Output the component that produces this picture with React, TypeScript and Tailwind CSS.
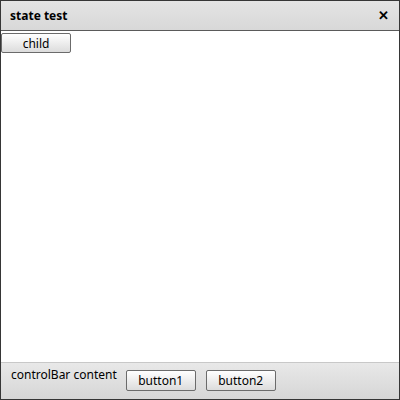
const App = () => {
  return (
    <div className="w-[400px] h-[400px] flex flex-col border border-[#363636] bg-white font-['Noto_Sans',sans-serif] text-[12px] text-black">
      <div className="h-[30px] flex items-center justify-between pl-[9px] pr-[10px] bg-gradient-to-b from-[#e4e4e4] to-[#d8d8d8] border-b border-[#5a5a5a]">
        <span className="font-bold">state test</span>
        <span className="font-bold text-[13px] leading-none">✕</span>
      </div>
      <div className="flex-1 pt-[2px]">
        <button className="w-[70px] h-[20px] border border-[#6b6b6b] rounded-[2px] bg-gradient-to-b from-white to-[#dcdcdc] text-[12px] leading-none pt-px">
          child
        </button>
      </div>
      <div className="h-[37px] flex items-start gap-[9px] pl-[10px] border-t border-[#c8c8c8] bg-gradient-to-b from-[#e8e8e8] to-[#d6d6d6]">
        <span className="mt-[3px]">controlBar content</span>
        <button className="mt-[7px] w-[70px] h-[21px] border border-[#6b6b6b] rounded-[2px] bg-gradient-to-b from-white to-[#dcdcdc] text-[12px] leading-none pt-px">
          button1
        </button>
        <button className="mt-[7px] ml-px w-[70px] h-[21px] border border-[#6b6b6b] rounded-[2px] bg-gradient-to-b from-white to-[#dcdcdc] text-[12px] leading-none pt-px">
          button2
        </button>
      </div>
    </div>
  )
}

export default App
